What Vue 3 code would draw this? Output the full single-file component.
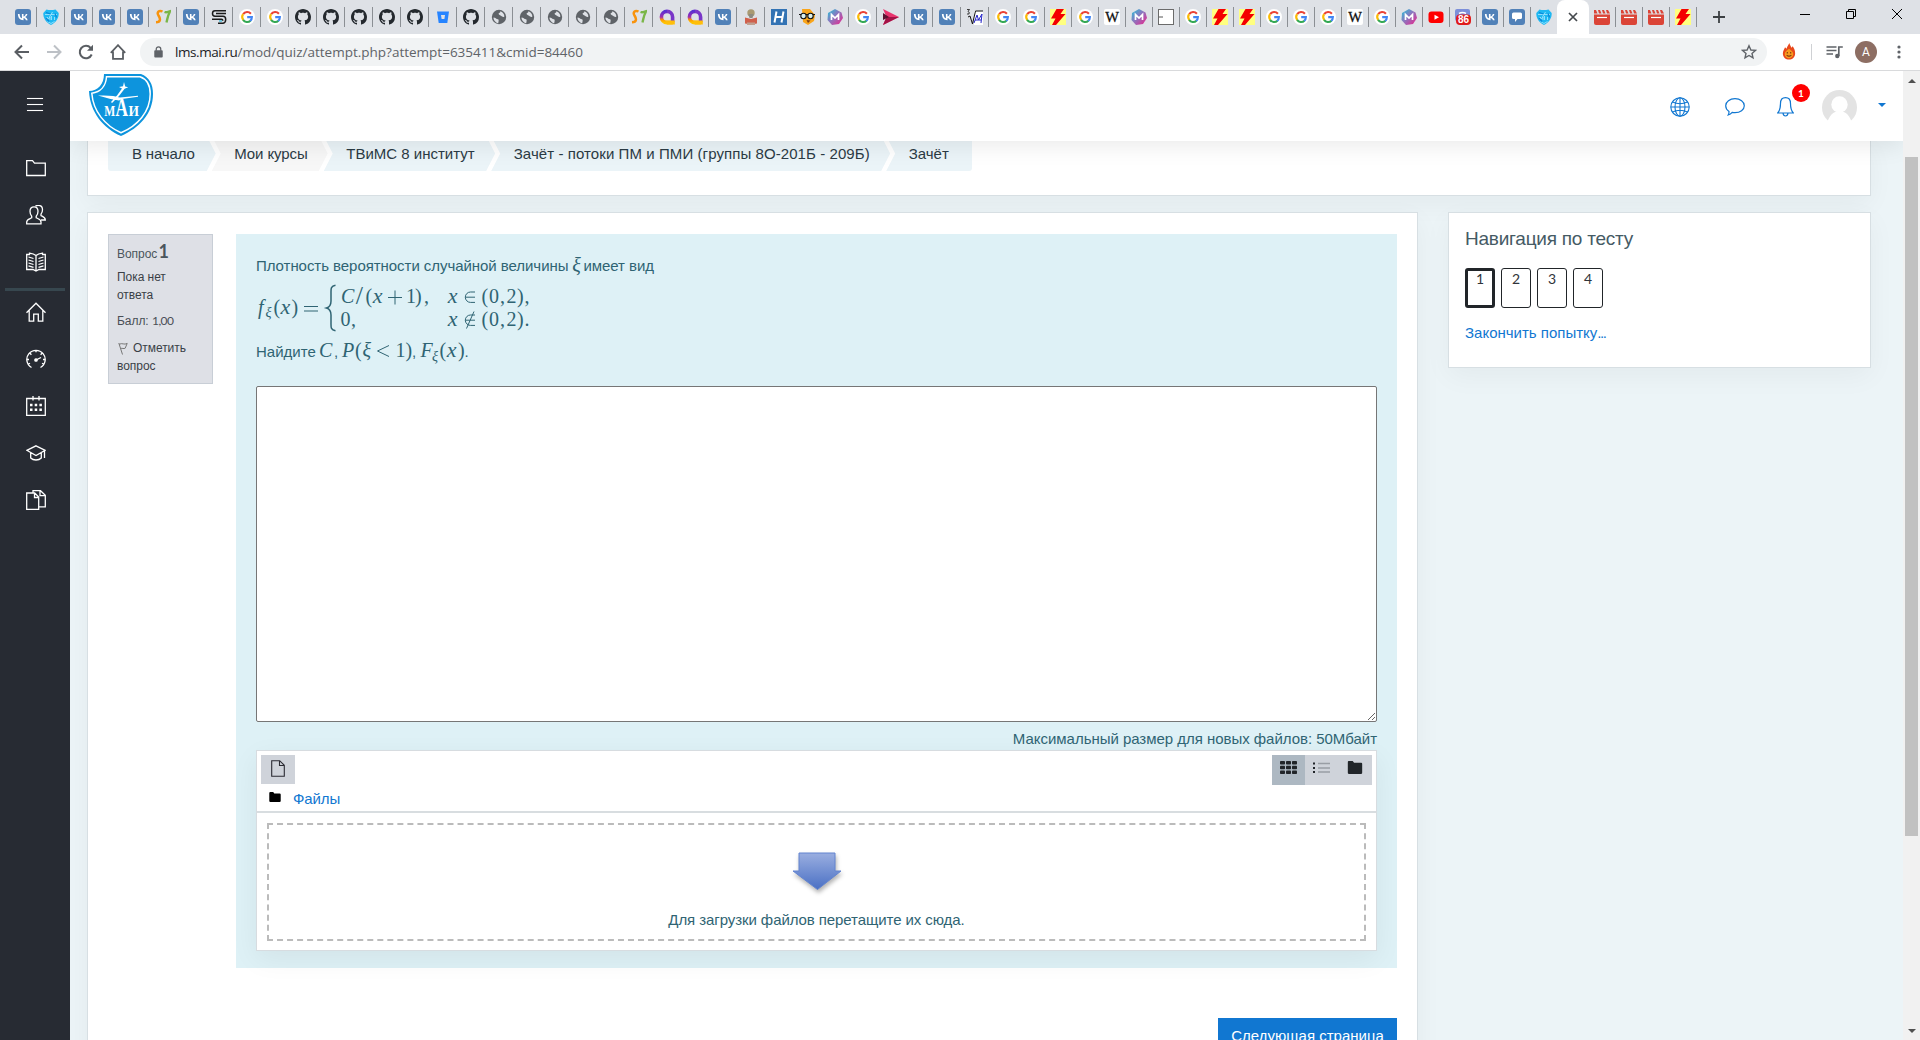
<script setup>
const tabs = (
  'vk mai vk vk vk s7 vk ess google google github github github github github bucket github ' +
  'globe globe globe globe globe s7 quill quill vk reader habr nerd math google play vk vk root ' +
  'google google bolt google wiki math box google bolt bolt google google google wiki google math ' +
  'youtube discord vk chat mai'
).split(' ').map((icon, i) => ({ icon, narrow: i > 36, last: i === 55 }))

const tabsAfter = ['clap', 'clap', 'clap', 'bolt']

const crumbs = [
  { text: 'В начало', cls: 'c1' },
  { text: 'Мои курсы', cls: 'c2' },
  { text: 'ТВиМС 8 институт', cls: 'c3' },
  { text: 'Зачёт - потоки ПМ и ПМИ (группы 8О-201Б - 209Б)', cls: 'c4' },
  { text: 'Зачёт', cls: 'c5' },
]

const sideTop = ['folder', 'users', 'book']
const sideBottom = ['home', 'gauge', 'calendar', 'grad', 'docs']
</script>

<template>
  <div class="window">
    <svg class="sprite" aria-hidden="true">
      <defs>
        <linearGradient id="gq" x1="0" y1="0" x2="0" y2="1">
          <stop offset="0" stop-color="#5a2fd0" /><stop offset=".5" stop-color="#a02fb0" /><stop offset=".75" stop-color="#ff9a00" /><stop offset="1" stop-color="#ffc400" />
        </linearGradient>
        <linearGradient id="gm" x1="0" y1="0" x2="1" y2="1">
          <stop offset="0" stop-color="#22c5d8" /><stop offset=".45" stop-color="#8a78c0" /><stop offset="1" stop-color="#f0208a" />
        </linearGradient>
        <linearGradient id="ga" x1="0" y1="0" x2="0" y2="1">
          <stop offset="0" stop-color="#9aaee0" /><stop offset="1" stop-color="#4a70c4" />
        </linearGradient>
      </defs>
      <symbol id="vk" viewBox="0 0 16 16">
        <rect width="16" height="16" rx="3" fill="#5181b8" />
        <path d="M8.300 11.200C5 11.200 3 8.900 2.900 5h1.700c.1 2.900 1.300 4.100 2.300 4.300V5h1.600v2.500c1-.1 2-1.200 2.300-2.500h1.600c-.3 1.500-1.400 2.600-2.200 3.100.8.4 2 1.300 2.500 3.100h-1.800c-.4-1.200-1.300-2.100-2.400-2.200v2.200z" fill="#fff" />
      </symbol>
      <symbol id="mai" viewBox="0 0 16 16">
        <path d="M3.500.5C6 1.300 9.500 1.200 12.500.5L15.700 4c.3 5-2.700 9.500-7.700 12C3 13.500 0 9 .3 4z" fill="#1fb8f2" />
        <path d="M2 5.500h12M9.500 3L6.500 8M4 11V8l1.500 2L7 8v3m1.500 0V7m3 4V8M4.500 12.500L8 14.500l3.500-2" stroke="#a8e8ff" stroke-width=".8" fill="none" />
        <path d="M3 3.500L7.500 5M3 9l3 3.500M12 4.500l1.500 4" stroke="#0a86d8" stroke-width="1.200" />
      </symbol>
      <symbol id="s7" viewBox="0 0 16 16">
        <path d="M7.500 2.500C4 .8 1.500 3.500 3.500 6.500S6 13 1 13.200" fill="none" stroke="#f8930d" stroke-width="2.500" />
        <path d="M9.500 3c2.500 1 3.500-.5 5.800-1-2.500 4-3 7-3.800 11.500" fill="none" stroke="#7ab648" stroke-width="2.300" />
      </symbol>
      <symbol id="ess" viewBox="0 0 16 16">
        <path d="M15 1.700H4Q1.500 1.700 1.500 4.400T4 7.200H12Q14.700 7.200 14.700 10.400T12 14.300H7M15 4.500H5M1 10.200h9.500q1.300 0 1.300 1.500" fill="none" stroke="#1b1b1b" stroke-width="1.500" />
        <path d="M8 12h3" stroke="#3ab8d8" stroke-width="1.300" />
      </symbol>
      <symbol id="google" viewBox="0 0 16 16">
        <circle cx="8" cy="8" r="8" fill="#fff" />
        <path d="M4.170 5.200A4.900 4.900 0 0 1 11.900 4.700" fill="none" stroke="#ea4335" stroke-width="2.100" />
        <path d="M4.300 11A4.900 4.900 0 0 1 4.100 5.200" fill="none" stroke="#fbbc05" stroke-width="2.100" />
        <path d="M11.500 11.700A4.900 4.900 0 0 1 4.100 10.800" fill="none" stroke="#34a853" stroke-width="2.100" />
        <path d="M8.200 8.100h4.700A4.900 4.900 0 0 1 11.200 11.900" fill="none" stroke="#4285f4" stroke-width="2.100" />
      </symbol>
      <symbol id="github" viewBox="0 0 16 16">
        <path fill="#24292e" d="M8 0C3.580 0 0 3.580 0 8c0 3.540 2.290 6.530 5.470 7.590.4.070.55-.17.55-.38 0-.19-.01-.82-.01-1.490-2.010.37-2.530-.49-2.690-.94-.09-.23-.48-.94-.82-1.130-.28-.15-.68-.52-.01-.53.63-.01 1.080.58 1.230.82.72 1.210 1.870.87 2.330.66.070-.52.28-.87.51-1.070-1.780-.2-3.640-.89-3.640-3.950 0-.87.31-1.590.82-2.150-.08-.2-.36-1.020.08-2.120 0 0 .67-.21 2.200.82.64-.18 1.320-.27 2-.27s1.360.09 2 .27c1.530-1.040 2.200-.82 2.200-.82.44 1.100.16 1.920.08 2.120.51.56.82 1.270.82 2.150 0 3.070-1.870 3.750-3.650 3.950.29.25.54.73.54 1.480 0 1.070-.01 1.930-.01 2.200 0 .21.15.46.55.38A8.010 8.010 0 0 0 16 8c0-4.420-3.580-8-8-8z" />
      </symbol>
      <symbol id="bucket" viewBox="0 0 16 16">
        <path d="M2 2.500h12L12.300 14H3.700z" fill="#2684ff" /><path d="M6 6h4l-.6 4H6.600z" fill="#dee1e6" />
      </symbol>
      <symbol id="globe" viewBox="0 0 16 16">
        <circle cx="8" cy="8" r="7.200" fill="#5f6368" />
        <path d="M2.500 8.500c2 .2 2.500 1.500 4.500 1.700 1.200.3.500 2.300.2 4C4.500 13.700 2.300 11 2.500 8.500zM9 2.200c1 .8 0 1.500-1.200 2C7 4.800 8.500 6 9.500 6.500c1.500.8 2.500 2 3.800 1.200C13.500 5 11.500 2.700 9 2.200z" fill="#dee1e6" />
      </symbol>
      <symbol id="quill" viewBox="0 0 16 16">
        <path d="M8 2.400a5.600 5.600 0 1 0 0 11.200h5.800" fill="none" stroke="url(#gq)" stroke-width="3.600" />
        <path d="M8 2.400A5.600 5.600 0 0 1 13.600 8V13" fill="none" stroke="#7a36c8" stroke-width="3.600" />
        <path d="M6 11.500h9.800v4H8z" fill="#ffbe0a" />
      </symbol>
      <symbol id="reader" viewBox="0 0 16 16">
        <circle cx="8" cy="4" r="3.700" fill="#a99a72" /><path d="M5.500 5h5l-1 4h-3z" fill="#8d8a80" />
        <path d="M2 8.500l6 1.500 6-1.500v6L8 15.500l-6-1z" fill="#d0604c" /><path d="M4 13.500h8V16H4z" fill="#c0a090" />
      </symbol>
      <symbol id="habr" viewBox="0 0 16 16">
        <rect width="16" height="16" fill="#3373b4" /><path d="M5.500 2.500l-2 11m9-11l-2 11M4.500 8h7" stroke="#fff" stroke-width="2" />
      </symbol>
      <symbol id="nerd" viewBox="0 0 16 16">
        <path d="M3 0h8l5 6-1 6-6 4-5-3z" fill="#f9a51b" /><path d="M7.500 11l4 .5-2.500 2.500z" fill="#7a3c12" />
        <path d="M0 5.500h16" stroke="#111" stroke-width="1" /><circle cx="4.500" cy="7" r="2.700" fill="#d8f0f0" stroke="#111" stroke-width="1.100" /><circle cx="11.500" cy="7" r="2.700" fill="#d8f0f0" stroke="#111" stroke-width="1.100" />
      </symbol>
      <symbol id="math" viewBox="0 0 16 16">
        <path d="M8 0l6.500 3.500L16 9l-4 6-7 1-4.500-5L1 4z" fill="url(#gm)" />
        <path d="M4.500 11V5.500L8 9l3.500-3.500V11" fill="none" stroke="#fff" stroke-width="1.700" />
      </symbol>
      <symbol id="play" viewBox="0 0 16 16">
        <path d="M0 0l16 8L0 16l3.500-8z" fill="#e8336d" /><path d="M3.500 8H16L0 16z" fill="#a31246" /><path d="M0 4l6 4-6 3z" fill="#5b1130" />
      </symbol>
      <symbol id="root" viewBox="0 0 16 16">
        <rect x="7" y="2" width="9" height="14" fill="#fff" /><path d="M1 8l2-1 2.500 8L8.500 2H16" fill="none" stroke="#111" />
        <path d="M0 .5h2.500L1 2.500q2 .5 1 2.500H0" fill="none" stroke="#111" stroke-width=".8" />
        <path d="M7 14l3-8 1.500 5L15 5l-1 9M8 11h6" fill="none" stroke="#2525c8" stroke-width="1" />
      </symbol>
      <symbol id="bolt" viewBox="0 0 16 16">
        <rect width="16" height="16" fill="#ffff80" /><path d="M6.500 0H14L10.500 5H15.500L6 16H2l3.500-6.500H1z" fill="#f40000" />
      </symbol>
      <symbol id="wiki" viewBox="0 0 16 16">
        <rect width="16" height="16" rx="2" fill="#fff" /><text x="8" y="13" text-anchor="middle" font-family="Liberation Serif, serif" font-size="14.500" fill="#111" stroke="#111" stroke-width=".3">W</text>
      </symbol>
      <symbol id="box" viewBox="0 0 16 16"><rect x=".5" y=".5" width="15" height="15" fill="#fff" stroke="#6b6b6b" /><path d="M1 8h4" stroke="#555" /></symbol>
      <symbol id="youtube" viewBox="0 0 16 16"><rect x=".5" y="2.500" width="15" height="11.500" rx="3" fill="#f00" /><path d="M6.500 5.800v5L11 8.300z" fill="#fff" /></symbol>
      <symbol id="discord" viewBox="0 0 16 16">
        <rect x="0" y="0" width="15" height="12" rx="2" fill="#7c8fd9" /><path d="M4 4.500q3.500-2 7 0" stroke="#fff" stroke-width="1.500" fill="none" />
        <rect x="1" y="5.500" width="15" height="10.500" rx="4" fill="#e01b1b" /><text x="8.500" y="14.300" text-anchor="middle" font-family="Liberation Sans, sans-serif" font-weight="700" font-size="10" fill="#fff">86</text>
      </symbol>
      <symbol id="chat" viewBox="0 0 16 16"><rect width="16" height="16" rx="3" fill="#5181b8" /><path d="M4.500 3.500h7q1.500 0 1.500 1.500v3.500q0 1.500-1.500 1.500H8.500L6 13v-3H4.500Q3 10 3 8.500V5q0-1.500 1.500-1.500z" fill="#fff" /></symbol>
      <symbol id="clap" viewBox="0 0 16 16"><path d="M0 5.500h16V14q0 2-2 2H2q-2 0-2-2z" fill="#db4437" /><path d="M0 1h2l1.500 3.500H0zM4 1h2l1.500 3.500h-2.500zM8 1h2l1.500 3.500H9zM12 1h2l2 3.500h-3z" fill="#db4437" /><path d="M3 8.500h10" stroke="#fff" stroke-width="1.200" /></symbol>

      <symbol id="folder" viewBox="0 0 20 20"><path d="M.7 2.700h5.800l2 2.500h10.800v12.300H.7z" /></symbol>
      <symbol id="users" viewBox="0 0 20 20">
        <path d="M8 1.800c2.600 0 4 1.800 4 4.500 0 2-.8 4-1.800 5v1.500c1.500 1 4.800 1.500 4.800 4.200v1.800H.7V17c0-2.700 3.600-3.200 5-4.200v-1.500C4.800 10.300 4 8.300 4 6.300c0-2.700 1.400-4.500 4-4.500z" />
        <path d="M9.500 1.200c.7-.6 1.600-.8 2.700-.8 2.800 0 4.300 1.800 4.300 4.300 0 1.800-.7 3.400-1.500 4.400v1.500c1.700 1 4.300 1.500 4.300 4.400H15" />
      </symbol>
      <symbol id="book" viewBox="0 0 20 20">
        <path d="M10 3.500C8 2 5.500 1.500 3.500 1.200V2.500H.7v15h6.300L10 19l3-1.500h6.300v-15h-2.800V1.200C14.500 1.500 12 2 10 3.500zM10 3.500V19M2.500 5l5 1.500m-5 1.500l5 1.500m-5 1.500l5 1.500m-5 1.300l5 1.500M17.500 5l-5 1.500m5 1.500l-5 1.500m5 1.500l-5 1.500m5 1.300l-5 1.500" />
      </symbol>
      <symbol id="home" viewBox="0 0 20 20"><path d="M.5 10.800L10 1.200l9.500 9.600M3.200 8.500v10.700h4.500v-7h4.600v7h4.500V8.500" /></symbol>
      <symbol id="gauge" viewBox="0 0 20 20"><path d="M5.500 18.500a9.200 9.200 0 1 1 9 0M10 11l5-2.500M10 1v2.200M4 4.200l1.400 1.500M16 4.200l-1.400 1.500M1 10.500h2M17 10.500h2M2.500 15l1.500-.8M17.500 15l-1.500-.8" /><circle cx="10" cy="11" r="1.200" fill="#fff" /></symbol>
      <symbol id="calendar" viewBox="0 0 20 20"><path d="M.7 2.500h18.600v16.800H.7zM7 0v4.500M13 0v4.500" /><path d="M4 9h2.500m2.200 0h2.500m2.200 0h2.500M4 13.800h2.500m2.200 0h2.500m2.200 0h2.500" stroke-width="2.500" /></symbol>
      <symbol id="grad" viewBox="0 0 20 20"><path d="M10 2.800l9.200 4.500L10 12.500.8 7.300zM4.700 9.500V15q2 2 5.300 2t5.300-2V9.500M18.500 7.500V15" /></symbol>
      <symbol id="docs" viewBox="0 0 20 20"><path d="M.7 3h8L12.700 7v12.300H.7zM8.500 3v4.500h4M7 2.800V.7h7.500l4.800 4.500v11.600H13M14 .7v5h5" /></symbol>
      <symbol id="blackfolder" viewBox="0 0 16 14"><path d="M1.500 0h4l1.500 2h7.500Q16 2 16 3.500v9q0 1.500-1.500 1.500h-13Q0 14 0 12.500v-11Q0 0 1.500 0z" /></symbol>
    </svg>

    <div class="tabstrip">
      <div v-for="(t, i) in tabs" :key="i" class="tab" :class="{ narrow: t.narrow, last: t.last }">
        <svg><use :href="'#' + t.icon" /></svg>
      </div>
      <div class="tab active">
        <svg viewBox="0 0 16 16"><path d="M4 4l8 8M12 4l-8 8" stroke="#45494d" stroke-width="1.700" /></svg>
      </div>
      <div v-for="(t, i) in tabsAfter" :key="'a' + i" class="tab narrow">
        <svg><use :href="'#' + t" /></svg>
      </div>
      <svg class="plus" viewBox="0 0 14 14"><path d="M7 1v12M1 7h12" stroke="#3c4043" stroke-width="1.800" /></svg>
      <div class="controls">
        <svg viewBox="0 0 12 12"><path d="M1 6.500h10" stroke="#000" /></svg>
        <svg viewBox="0 0 12 12"><path d="M1.500 3.500h7v7h-7zM3.500 3.500v-2h7v7h-2" fill="none" stroke="#000" /></svg>
        <svg viewBox="0 0 12 12"><path d="M1 1l10 10M11 1L1 11" stroke="#000" /></svg>
      </div>
    </div>

    <div class="toolbar">
      <svg class="nav" viewBox="0 0 16 16"><path d="M15 8H2M8 1.500L1.500 8 8 14.500" fill="none" stroke="#5a5e63" stroke-width="2" /></svg>
      <svg class="nav" viewBox="0 0 16 16"><path d="M1 8h13M8 1.500L14.500 8 8 14.500" fill="none" stroke="#bdc1c6" stroke-width="2" /></svg>
      <svg class="nav" viewBox="0 0 16 16"><path d="M13.700 10.500A6.200 6.200 0 1 1 12.700 4" fill="none" stroke="#5a5e63" stroke-width="2" /><path d="M15 .8v6H9z" fill="#5a5e63" /></svg>
      <svg class="nav" viewBox="0 0 16 16"><path d="M.8 8.800L8 1.200l7.200 7.600M3 7.500v7.300h10V7.500" fill="none" stroke="#5a5e63" stroke-width="1.800" /></svg>
      <div class="omnibox">
        <svg class="lock" viewBox="0 0 10 13"><rect x=".3" y="4.500" width="9.400" height="8" rx="1" fill="#5f6368" /><path d="M2.500 5V3.200a2.500 2.500 0 0 1 5 0V5" fill="none" stroke="#5f6368" stroke-width="1.400" /></svg>
        <span class="host">lms.mai.ru</span><span class="path">/mod/quiz/attempt.php?attempt=635411&amp;cmid=84460</span>
        <svg class="star" viewBox="0 0 16 16"><path d="M8 1.800l1.900 4.200 4.500.4-3.400 3 1 4.500L8 11.500l-4 2.400 1-4.500-3.400-3L6.100 6z" fill="none" stroke="#5f6368" stroke-width="1.400" /></svg>
      </div>
      <svg class="flame" viewBox="0 0 14 18"><path d="M7.500 0c0 2 1.500 3 2 5L11 3.500c1.500 2.500 2.500 4.500 2.500 7.500 0 3.800-3 6.500-6.500 6.500S.5 15 .5 11C.5 8.500 2 7 2.800 4.500L4.500 6C5 3.500 6.500 2 7.500 0z" fill="#e8481b" /><path d="M7 6c2.500 2 4.500 3 4.500 5.700 0 2.700-2 4.500-4.500 4.500s-4.500-1.800-4.500-4.500C2.500 9 4.500 8 7 6z" fill="#f79a1e" /><path d="M5.200 9.500v1.500M8.800 9.500v1.500M4.500 12.800q2.500 2.200 5 0" stroke="#7b3410" stroke-width="1.100" fill="none" /></svg>
      <i class="sep"></i>
      <svg class="queue" viewBox="0 0 17 14"><path d="M.5 2h10M.5 5.500h10M.5 9h6.500M12.800 11V2h4" fill="none" stroke="#5f6368" stroke-width="1.700" /><circle cx="11.300" cy="11" r="2.200" fill="#5f6368" /></svg>
      <span class="profile">A</span>
      <svg class="dots" viewBox="0 0 4 14"><g fill="#5f6368"><circle cx="2" cy="2" r="1.600" /><circle cx="2" cy="7" r="1.600" /><circle cx="2" cy="12" r="1.600" /></g></svg>
    </div>

    <div class="page">
      <aside class="sidebar">
        <div class="burger"><i></i><i></i><i></i></div>
        <div class="side-group top"><svg v-for="s in sideTop" :key="s" class="side-ico"><use :href="'#' + s" /></svg></div>
        <hr />
        <div class="side-group"><svg v-for="s in sideBottom" :key="s" class="side-ico"><use :href="'#' + s" /></svg></div>
      </aside>

      <main class="main">
        <header class="header">
          <svg class="logo" viewBox="0 0 64 62">
            <path d="M15 0H52C60 3 64 10 64 20 64 40 50 54 32 62 14 54 1 38 0 17 9 17 15 10 15 0z" fill="#0d94dd" />
            <path d="M17.500 2.800H51C57.500 5 61.200 11 61.200 20 61.200 38 48.500 51.500 32 58.800 16 51.500 4.200 37.500 2.800 19.300 11.500 18 17 12 17.500 2.800z" fill="none" stroke="#fff" stroke-width="1.500" />
            <path d="M9 21.600Q24 21 31 23.500L49 21.800v1L33 25 30 26.500 21.500 25zM35 8l1.200 4.500 3 .8-3.600 1.400L30 22l-7 7-1-1 6-6.500 5-7-3-1.500 4-.8z" fill="#fff" />
            <g fill="#fff" font-family="Liberation Serif, serif" font-weight="700">
              <text x="15.200" y="42" font-size="15.500" textLength="11" lengthAdjust="spacingAndGlyphs">М</text>
              <text x="26.500" y="42" font-size="26" textLength="12.500" lengthAdjust="spacingAndGlyphs">А</text>
              <text x="39.500" y="42" font-size="15.500" textLength="10.500" lengthAdjust="spacingAndGlyphs">И</text>
            </g>
          </svg>
          <div class="header-icons">
            <svg class="h-globe" viewBox="0 0 20 20"><g fill="none" stroke="#1177d1" stroke-width="1.100"><circle cx="10" cy="10" r="9.200" /><ellipse cx="10" cy="10" rx="5" ry="9.200" /><path d="M10 .8v18.400M.8 10h18.400M2.500 5q7.500 3.500 15 0M2.500 15q7.500-3.500 15 0" /></g></svg>
            <svg class="h-chat" viewBox="0 0 20 18"><path d="M10 .7c5.200 0 9.300 3 9.300 7s-4.100 7-9.300 7c-1 0-2-.1-2.800-.3-1 1.200-2.400 2.200-4 2.600.6-1 .9-2.300.8-3.600C2 12 .7 10 .7 7.700c0-4 4.100-7 9.300-7z" fill="none" stroke="#1177d1" stroke-width="1.200" /></svg>
            <div class="h-bell">
              <svg viewBox="0 0 17 20"><path d="M8.500.7c3.500 0 5 2.600 5 5.800 0 5 .8 7.200 2.800 9.500H.7c2-2.300 2.800-4.500 2.800-9.500 0-3.200 1.500-5.800 5-5.800zM6 16.200q.4 2.800 2.500 2.800t2.500-2.800" fill="none" stroke="#1177d1" stroke-width="1.200" /></svg>
              <span class="badge">1</span>
            </div>
            <svg class="avatar" viewBox="0 0 35 35"><circle cx="17.500" cy="17.500" r="17.500" fill="#e3e3e3" /><circle cx="17.500" cy="14.500" r="8.200" fill="#fff" /><path d="M4.500 35Q8 21 17.500 21T30.500 35z" fill="#fff" /></svg>
            <i class="caret"></i>
          </div>
        </header>

        <section class="card crumb-card">
          <nav class="crumbs"><span v-for="c in crumbs" :key="c.cls" class="crumb" :class="c.cls">{{ c.text }}</span></nav>
        </section>

        <div class="columns">
          <section class="card quiz">
            <div class="question">
              <div class="info">
                <div class="no"><span>Вопрос</span> <b>1</b></div>
                <p class="state">Пока нет ответа</p>
                <p class="grade">Балл: <span>1,00</span></p>
                <p class="flag"><svg viewBox="0 0 10 13"><path d="M.8 1l3.700 11.500M1.200 2.300c3-1.800 5 1 8-.9L7.200 6.200C5.500 7.200 4.500 5.800 2.600 6.500" fill="none" stroke="#777" stroke-width="1" /></svg>Отметить вопрос</p>
              </div>

              <div class="formulation">
                <p class="line first">Плотность вероятности случайной величины<span class="xi">ξ</span><span>имеет вид</span></p>
                <svg class="formula" viewBox="256 277 300 64">
                  <g class="m">
                    <text class="i f" x="258" y="313.500">f</text><text class="i sub" x="265.500" y="317">ξ</text><text x="273.500" y="313.500">(</text><text class="i x" x="280.500" y="313.500">x</text><text x="291.500" y="313.500">)</text>
                    <path d="M304 306.500h14M304 311h14" />
                    <path class="brace" d="M335.500 285.300C330.500 286 331 289 331 293v8c0 4-1 6-4.500 7 3.500 1 4.500 3 4.500 7v8c0 4-.5 7 4.500 7.700" />
                    <text class="i" x="341" y="302.500">C</text><text x="355.700" y="304" class="slash">/</text><text x="365.500" y="302.500">(</text><text class="i x" x="372.700" y="302.500">x</text>
                    <path d="M388 297.500h14M395 290.500v14" />
                    <text x="406" y="302.500">1</text><text x="415" y="302.500">)</text><text x="424" y="302.500">,</text>
                    <text class="i x" x="447.700" y="302.500">x</text><path d="M475 292h-4.500a5.200 5.200 0 0 0 0 10.400H475M465.300 297.200H475" />
                    <text x="481.500" y="302.500">(</text><text x="489" y="302.500">0</text><text x="500" y="302.500">,</text><text x="506.500" y="302.500">2</text><text x="517" y="302.500">)</text><text x="524.500" y="302.500">,</text>
                    <text x="340.500" y="325.500">0</text><text x="351" y="325.500">,</text>
                    <text class="i x" x="447.700" y="325.500">x</text><path d="M475 315h-4.500a5.200 5.200 0 0 0 0 10.400H475M465.300 320.200H475M474 311.500l-7.500 17" />
                    <text x="481.500" y="325.500">(</text><text x="489" y="325.500">0</text><text x="500" y="325.500">,</text><text x="506.500" y="325.500">2</text><text x="517" y="325.500">)</text><text x="524.500" y="325.500">.</text>
                  </g>
                </svg>
                <div class="line task"><span>Найдите</span>
                  <svg class="formula2" viewBox="318 338 160 28">
                    <g class="m">
                      <text class="i" x="319" y="356.500">C</text><text class="s" x="334" y="356.500">,</text><text class="i" x="342" y="356.500">P</text><text x="355" y="356.500">(</text><text class="i" x="362.500" y="356.500">ξ</text>
                      <path d="M389 345.500l-11.500 5.500 11.500 5.500" /><text x="395.500" y="356.500">1</text><text x="405.500" y="356.500">)</text><text class="s" x="412" y="356.500">,</text>
                      <text class="i" x="420.500" y="356.500">F</text><text class="i sub" x="432" y="360.500">ξ</text><text x="439.500" y="356.500">(</text><text class="i x" x="446.700" y="356.500">x</text><text x="458" y="356.500">)</text><text class="s" x="464.500" y="356.500">.</text>
                    </g>
                  </svg>
                </div>

                <textarea class="answer"></textarea>
                <div class="limit">Максимальный размер для новых файлов: 50Мбайт</div>

                <div class="files">
                  <div class="bar">
                    <div class="bar-row">
                      <span class="btn add"><svg viewBox="0 0 14 17"><path d="M.7.7h8l4.600 4.600v11H.7zM8.500.7v4.800h4.800" fill="none" stroke="#2b2b33" stroke-width="1.100" /></svg></span>
                      <div class="views">
                        <span class="btn on"><svg viewBox="0 0 17 13"><g fill="#212529"><rect width="5" height="3.600" rx=".8" /><rect x="6" width="5" height="3.600" rx=".8" /><rect x="12" width="5" height="3.600" rx=".8" /><rect y="4.700" width="5" height="3.600" rx=".8" /><rect x="6" y="4.700" width="5" height="3.600" rx=".8" /><rect x="12" y="4.700" width="5" height="3.600" rx=".8" /><rect y="9.400" width="5" height="3.600" rx=".8" /><rect x="6" y="9.400" width="5" height="3.600" rx=".8" /><rect x="12" y="9.400" width="5" height="3.600" rx=".8" /></g></svg></span>
                        <span class="btn"><svg viewBox="0 0 17 13"><path d="M0 2.500h2M0 7h2M0 11h2" stroke="#212529" stroke-width="2" /><path d="M5 2.500h12M5 7h12M5 11h12" stroke="#999ea5" stroke-width="1.500" /></svg></span>
                        <span class="btn tree"><svg viewBox="0 0 16 14"><use href="#blackfolder" fill="#212529" /></svg></span>
                      </div>
                    </div>
                    <div class="crumb-path"><svg><use href="#blackfolder" /></svg><a>Файлы</a></div>
                  </div>
                  <div class="drop">
                    <svg class="arrow" viewBox="0 0 52 42"><path d="M7 1h36v18h6L25.500 37.500 1 19h6z" fill="url(#ga)" stroke="#6284d0" /></svg>
                    <span>Для загрузки файлов перетащите их сюда.</span>
                  </div>
                </div>
              </div>
            </div>
            <div class="next"><span>Следующая страница</span></div>
          </section>

          <section class="card test-nav">
            <h5>Навигация по тесту</h5>
            <div class="qn"><span class="cur">1</span><span>2</span><span>3</span><span>4</span></div>
            <a>Закончить попытку<span class="ell">...</span></a>
          </section>
        </div>
      </main>

      <div class="scrollbar"><i class="up"></i><div class="thumb"></div><i class="down"></i></div>
    </div>
  </div>
</template>

<style>
body { overflow: hidden; }
</style>

<style scoped>
* { box-sizing: border-box; }
p, h5, hr { margin: 0; }
svg { display: block; flex: none; }
.sprite { position: absolute; width: 0; height: 0; }
.window { width: 1920px; height: 1040px; display: flex; flex-direction: column; overflow: hidden; background: #fff; font-family: "Liberation Sans", sans-serif; font-size: 15px; color: #2f6473; }

.tabstrip { height: 34px; background: #dee1e6; display: flex; align-items: flex-start; padding-left: 9px; flex: none; }
.tab { width: 28px; height: 34px; display: flex; align-items: center; padding-left: 6px; position: relative; }
.tab svg { width: 16px; height: 16px; }
.tab::after { content: ""; position: absolute; right: 0; top: 7px; width: 1px; height: 20px; background: #8b8f94; }
.tab.narrow { width: 27px; padding-left: 5px; }
.tab.last { width: 26px; }
.tab.last::after, .tab.active::after { display: none; }
.tab.active { width: 32px; padding-left: 8px; background: #fff; border-radius: 8px 8px 0 0; }
.plus { width: 14px; height: 14px; margin: 10px 0 0 15px; }
.controls { margin-left: auto; display: flex; gap: 34px; padding: 8px 17px 0 0; }
.controls svg { width: 12px; height: 12px; }

.toolbar { height: 37px; flex: none; display: flex; align-items: center; padding: 0 0 1px 14px; border-bottom: 1px solid #d9dadc; }
.nav { width: 16px; height: 16px; margin-right: 16px; }
.omnibox { width: 1627px; height: 28px; margin-left: -2px; border-radius: 14px; background: #f1f3f4; display: flex; align-items: center; padding: 0 10px 0 14px; font: 13.5px/28px "Open Sans", sans-serif; color: #5f6368; }
.lock { width: 9px; height: 12px; margin-right: 12px; }
.host { color: #202124; letter-spacing: -.42px; }
.star { width: 16px; height: 16px; margin-left: auto; }
.flame { width: 14px; height: 17px; margin-left: 15px; }
.sep { width: 1px; height: 16px; background: #cfd1d4; margin: 0 14px 0 15px; }
.queue { width: 17px; height: 14px; }
.profile { width: 22px; height: 22px; border-radius: 50%; background: #8d6e63; color: #fff; font: 12px/22px Roboto, sans-serif; text-align: center; margin-left: 12px; }
.dots { width: 4px; height: 14px; margin-left: 20px; }

.page { height: 969px; display: flex; }
.sidebar { width: 70px; background: #272b33; flex: none; padding-top: 27px; }
.burger { width: 16px; height: 13px; margin-left: 27px; display: flex; flex-direction: column; justify-content: space-between; }
.burger i { height: 1px; background: #fff; box-shadow: 0 0 1px rgba(255, 255, 255, .5); }
.side-group { display: flex; flex-direction: column; align-items: center; gap: 27px; padding: 11px 0 0 2px; }
.side-group.top { padding-top: 47px; height: 177px; }
.side-ico { width: 20px; height: 20px; fill: none; stroke: #fff; stroke-width: 1.300px; }
hr { border: 0; height: 3px; margin: 0 5px; background: #37474f; }

.main { width: 1833px; background: #ecf4f7; overflow: hidden; display: flex; flex-direction: column; }
.header { height: 70px; flex: none; background: #fff; box-shadow: 0 4px 24px rgba(0, 0, 0, .09); position: relative; z-index: 2; display: flex; justify-content: space-between; padding: 3px 17px 0 19px; }
.logo { width: 64px; height: 62px; }
.header-icons { display: flex; align-items: center; height: 66px; }
.h-globe { width: 20px; height: 20px; }
.h-chat { width: 20px; height: 18px; margin-left: 35px; }
.h-bell { width: 17px; height: 20px; margin-left: 32px; position: relative; }
.h-bell svg { width: 17px; height: 20px; }
.badge { position: absolute; left: 15px; top: -13px; width: 18px; height: 18px; border-radius: 50%; background: #f00; color: #fff; font: 700 10px/19px Lato, sans-serif; text-align: center; }
.avatar { width: 35px; height: 35px; margin-left: 28px; }
.caret { border: 4px solid transparent; border-top-color: #1177d1; border-bottom: 0; margin: 0 0 4px 21px; }

.card { background: #fff; border: 1px solid #d7dfe3; box-shadow: 0 8px 26px rgba(0, 0, 0, .045); flex: none; }
.crumb-card { height: 55px; margin: 0 32px 16px 17px; border-top: 0; padding-left: 20px; }
.crumbs { display: flex; height: 30px; border-radius: 0 0 3px 3px; overflow: hidden; width: 864px; }
.crumb { height: 30px; line-height: 25px; color: #2b3b45; background: #ebf4f8; padding: 0 20.500px 0 22.500px; margin-left: -4px; white-space: nowrap; clip-path: polygon(2.600px 0, calc(100% - 6.400px) 0, 100% 12.500px, calc(100% - 9px) 100%, 0 100%, 9px 12.500px); }
.c1 { margin-left: 0; padding-left: 24px; width: 108px; letter-spacing: -.15px; clip-path: polygon(0 0, calc(100% - 6.400px) 0, 100% 12.500px, calc(100% - 9px) 100%, 0 100%); }
.c2 { background: #f7f7f7; width: 116px; letter-spacing: -.1px; }
.c3 { width: 172px; }
.c4 { width: 399px; letter-spacing: .08px; }
.c5 { width: 86px; clip-path: polygon(2.600px 0, 100% 0, 100% 100%, 0 100%, 9px 12.500px); }

.columns { display: flex; gap: 30px; padding-left: 17px; align-items: flex-start; }
.quiz { width: 1331px; height: 900px; padding: 21px 20px 0; }
.question { display: flex; gap: 23px; align-items: flex-start; }
.info { width: 105px; height: 150px; background: #dee0e6; border: 1px solid #c8ced6; padding: 6px 8px 0; font-size: 12px; line-height: 18px; color: #3a3f46; letter-spacing: -.05px; }
.no { height: 22px; line-height: 22px; white-space: nowrap; color: #4a555c; }
.no b { font: 700 18px/20px Lato, sans-serif; margin-left: -2px; }
.state { width: 60px; margin-top: 5px; }
.grade { margin-top: 8px; color: #4a4f56; }
.grade span { font-family: Lato, sans-serif; letter-spacing: -.5px; }
.flag { margin-top: 9px; width: 82px; }
.flag svg { display: inline-block; width: 10px; height: 13px; margin: 0 5px 0 1px; vertical-align: -3px; }

.formulation { width: 1161px; height: 734px; background: #def1f6; padding: 21px 20px 0; }
.line { height: 22px; line-height: 22px; white-space: nowrap; display: flex; }
.line.first { letter-spacing: -.05px; }
.xi { font: italic 20px/20px "Liberation Serif", serif; width: 14px; margin-left: 1px; text-align: center; }
.formula { width: 300px; height: 64px; }
.task { width: 300px; }
.task span { width: 62px; }
.formula2 { width: 160px; height: 28px; margin-top: -3px; }
.m { font-family: "Liberation Serif", serif; font-size: 20px; fill: #2f6473; }
.m path { fill: none; stroke: #2f6473; stroke-width: 1px; }
.m .brace { stroke-width: 1.500px; }
.m .i { font-style: italic; }
.m .x { font-size: 22px; }
.m .sub { font-size: 14px; }
.m .slash { font-size: 26px; }
.m .s { font: 15px "Liberation Sans", sans-serif; }
.answer { display: block; width: 1121px; height: 336px; margin-top: 23px; border: 1px solid #767676; border-radius: 2px; resize: both; outline: 0; background: #fff; }
.limit { height: 28px; line-height: 33px; text-align: right; letter-spacing: -.03px; white-space: nowrap; }
.files { height: 201px; border: 1px solid #d7dce0; background: #fff; box-shadow: 0 8px 26px rgba(0, 0, 0, .06); }
.bar { height: 62px; border-bottom: 2px solid #d8dde0; padding: 4px 4px 4px; }
.bar-row { display: flex; justify-content: space-between; height: 30px; }
.btn { width: 34px; height: 30px; background: #cfd3da; display: flex; justify-content: center; padding: 6px 0 0; }
.btn svg { width: 17px; height: 13px; }
.add { height: 29px; padding-top: 5px; }
.add svg { width: 14px; height: 17px; }
.views { display: flex; }
.views .btn { width: 33px; }
.views .on { background: #adb8c2; }
.views .tree { width: 34px; }
.tree svg { width: 16px; }
.crumb-path { display: flex; height: 24px; line-height: 24px; padding-left: 8px; gap: 12px; }
.crumb-path svg { width: 12px; height: 10px; margin-top: 7px; }
a { color: #1177d1; }
.crumb-path a { letter-spacing: -.1px; line-height: 27px; }
.drop { height: 118px; margin: 10px; border: 2px dashed #bbb; display: flex; flex-direction: column; align-items: center; padding-top: 27px; letter-spacing: -.08px; }
.arrow { width: 52px; height: 42px; margin-left: 3px; filter: drop-shadow(1px 3px 2px rgba(0, 0, 0, .3)); }
.drop span { line-height: 22px; margin-top: 15px; }
.next { margin-top: 50px; display: flex; justify-content: flex-end; }
.next span { width: 179px; height: 40px; background: #1177d1; color: #fff; line-height: 36px; text-align: center; }

.test-nav { width: 423px; height: 156px; padding: 13px 16px; }
h5 { font-size: 19px; font-weight: 400; line-height: 26px; letter-spacing: -.24px; color: #455a64; }
.qn { display: flex; gap: 6px; margin: 16px 0 13px; }
.qn > span { width: 30px; height: 40px; border: 1px solid #212529; border-radius: 3px; font: 14px/19px Lato, sans-serif; text-align: center; color: #30343a; }
.qn .cur { border-width: 3px; line-height: 15px; }
.test-nav a { line-height: 23px; }
.ell { letter-spacing: -1.400px; }

.scrollbar { width: 17px; background: #f1f1f1; padding: 7px 2px 0; display: flex; flex-direction: column; align-items: center; }
.scrollbar i { border: 4px solid transparent; }
.scrollbar .up { border-bottom-color: #505050; border-top: 0; margin-top: 1px; }
.scrollbar .down { border-top-color: #505050; border-bottom: 0; margin-top: 193px; }
.thumb { width: 13px; height: 679px; margin-top: 74px; background: #c1c1c1; }
</style>
